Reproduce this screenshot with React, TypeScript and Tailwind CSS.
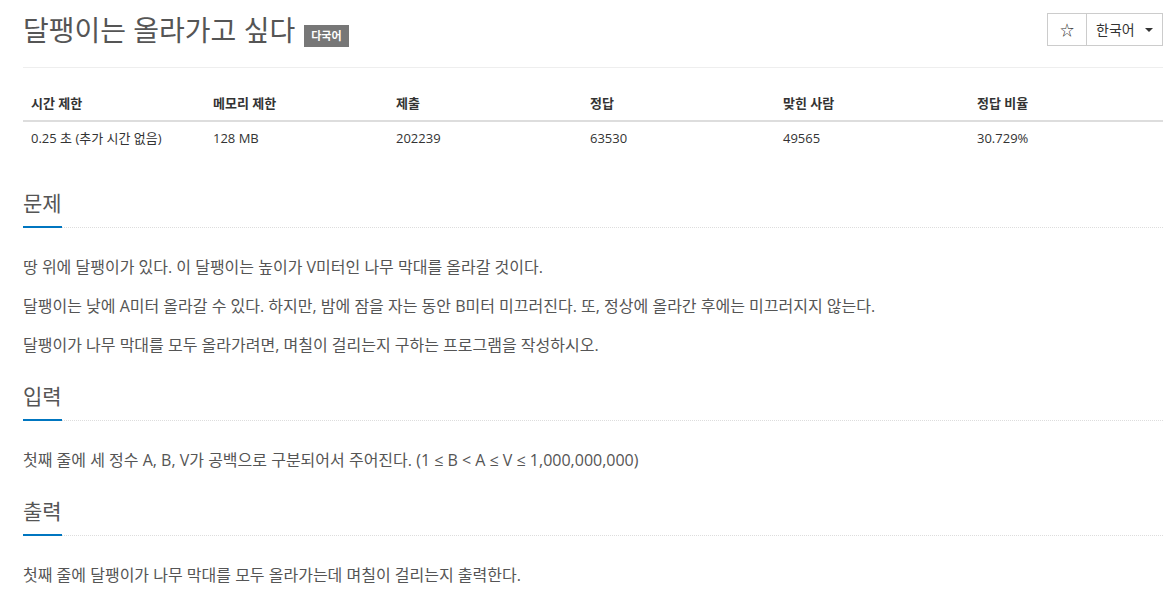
export default function App() {
  const stats = [
    { label: "시간 제한", value: "0.25 초 (추가 시간 없음)" },
    { label: "메모리 제한", value: "128 MB" },
    { label: "제출", value: "202239" },
    { label: "정답", value: "63530" },
    { label: "맞힌 사람", value: "49565" },
    { label: "정답 비율", value: "30.729%" },
  ];

  const sections = [
    {
      title: "문제",
      body: [
        "땅 위에 달팽이가 있다. 이 달팽이는 높이가 V미터인 나무 막대를 올라갈 것이다.",
        "달팽이는 낮에 A미터 올라갈 수 있다. 하지만, 밤에 잠을 자는 동안 B미터 미끄러진다. 또, 정상에 올라간 후에는 미끄러지지 않는다.",
        "달팽이가 나무 막대를 모두 올라가려면, 며칠이 걸리는지 구하는 프로그램을 작성하시오.",
      ],
    },
    {
      title: "입력",
      body: ["첫째 줄에 세 정수 A, B, V가 공백으로 구분되어서 주어진다. (1 ≤ B < A ≤ V ≤ 1,000,000,000)"],
    },
    {
      title: "출력",
      body: ["첫째 줄에 달팽이가 나무 막대를 모두 올라가는데 며칠이 걸리는지 출력한다."],
    },
  ];

  return (
    <main className="min-h-screen bg-white font-['Open_Sans','Noto_Sans_CJK_KR',sans-serif] text-[#333]">
      <div className="ml-[23px] w-[1140px]">
        {/* header */}
        <div className="flex h-[68px] items-start justify-between border-b border-[#eee]">
          <div className="flex items-start gap-[9px] pt-[10px]">
            <h1 className="text-[28px] leading-[40px] text-[#555]">달팽이는 올라가고 싶다</h1>
            <span className="mt-[15px] flex h-[22px] items-center bg-[#777] px-[7px] text-[11px] font-bold text-white">
              다국어
            </span>
          </div>
          <div className="mt-[13px] flex h-[33px] border border-[#ccc] text-[14px] text-[#333]">
            <div className="flex w-[38px] items-center justify-center">☆</div>
            <div className="flex w-[76px] items-center gap-[10px] border-l border-[#ccc] pl-[9px]">
              <span>한국어</span>
              <span className="h-0 w-0 border-x-[4px] border-t-[4px] border-x-transparent border-t-[#333]" />
            </div>
          </div>
        </div>

        {/* stats table */}
        <div className="mt-[20px] text-[13px]">
          <div className="grid h-[34px] grid-cols-[182px_183px_194px_193px_194px_194px] items-center border-b-2 border-[#ddd] font-bold">
            {stats.map((s) => (
              <div key={s.label} className="px-[8px]">
                {s.label}
              </div>
            ))}
          </div>
          <div className="grid h-[33px] grid-cols-[182px_183px_194px_193px_194px_194px] items-center">
            {stats.map((s) => (
              <div key={s.label} className="px-[8px]">
                {s.value}
              </div>
            ))}
          </div>
        </div>

        {/* sections */}
        <div className="mt-[34px] flex flex-col gap-[25px]">
          {sections.map((sec) => (
            <section key={sec.title}>
              <div className="flex items-end">
                <h2 className="border-b-2 border-[#0076c0] pb-[9px] text-[21px] leading-[28px] text-[#555]">
                  {sec.title}
                </h2>
                <div className="flex-1 border-b border-dotted border-[#ddd]" />
              </div>
              <div className="mt-[27px] flex flex-col gap-[15px]">
                {sec.body.map((p) => (
                  <p key={p} className="text-[16px] leading-[24px] text-[#555]">
                    {p}
                  </p>
                ))}
              </div>
            </section>
          ))}
        </div>
      </div>
    </main>
  );
}
